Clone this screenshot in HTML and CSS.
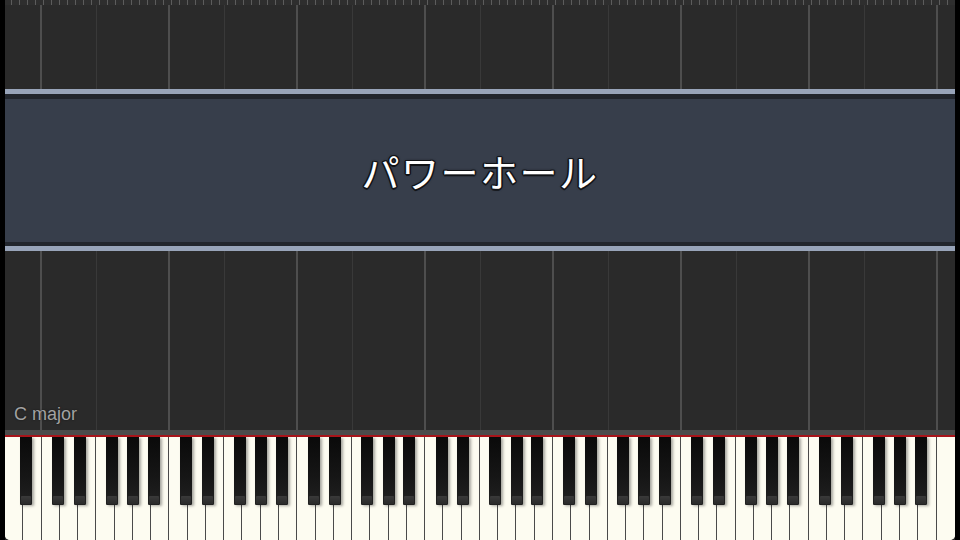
FILE: index.html
```html
<!DOCTYPE html>
<html lang="ja">
<head>
<meta charset="utf-8">
<title>パワーホール</title>
<link rel="stylesheet" href="styles.css">
</head>
<body>
<div class="screen">
  <div class="ruler"></div>
  <div class="grid grid-top"></div>
  <div class="band">
    <div class="band-inner">
      <h1 class="title">パワーホール</h1>
    </div>
  </div>
  <div class="grid grid-bottom">
    <span class="key-label">C major</span>
  </div>
  <div class="keybed"></div>
  <div class="keyboard">
    <div class="whites">
      <div class="white"></div><div class="white"></div><div class="white"></div><div class="white"></div><div class="white"></div><div class="white"></div><div class="white"></div><div class="white"></div><div class="white"></div><div class="white"></div>
      <div class="white"></div><div class="white"></div><div class="white"></div><div class="white"></div><div class="white"></div><div class="white"></div><div class="white"></div><div class="white"></div><div class="white"></div><div class="white"></div>
      <div class="white"></div><div class="white"></div><div class="white"></div><div class="white"></div><div class="white"></div><div class="white"></div><div class="white"></div><div class="white"></div><div class="white"></div><div class="white"></div>
      <div class="white"></div><div class="white"></div><div class="white"></div><div class="white"></div><div class="white"></div><div class="white"></div><div class="white"></div><div class="white"></div><div class="white"></div><div class="white"></div>
      <div class="white"></div><div class="white"></div><div class="white"></div><div class="white"></div><div class="white"></div><div class="white"></div><div class="white"></div><div class="white"></div><div class="white"></div><div class="white"></div>
      <div class="white"></div><div class="white last"></div>
    </div>
    <div class="black" style="left:14.8px"></div>
    <div class="black" style="left:46.8px"></div>
    <div class="black" style="left:68.6px"></div>
    <div class="black" style="left:100.6px"></div>
    <div class="black" style="left:121.9px"></div>
    <div class="black" style="left:142.7px"></div>
    <div class="black" style="left:174.7px"></div>
    <div class="black" style="left:196.5px"></div>
    <div class="black" style="left:228.5px"></div>
    <div class="black" style="left:249.8px"></div>
    <div class="black" style="left:270.5px"></div>
    <div class="black" style="left:302.6px"></div>
    <div class="black" style="left:324.4px"></div>
    <div class="black" style="left:356.4px"></div>
    <div class="black" style="left:377.7px"></div>
    <div class="black" style="left:398.4px"></div>
    <div class="black" style="left:430.5px"></div>
    <div class="black" style="left:452.2px"></div>
    <div class="black" style="left:484.3px"></div>
    <div class="black" style="left:505.5px"></div>
    <div class="black" style="left:526.3px"></div>
    <div class="black" style="left:558.4px"></div>
    <div class="black" style="left:580.1px"></div>
    <div class="black" style="left:612.2px"></div>
    <div class="black" style="left:633.4px"></div>
    <div class="black" style="left:654.2px"></div>
    <div class="black" style="left:686.2px"></div>
    <div class="black" style="left:708.0px"></div>
    <div class="black" style="left:740.0px"></div>
    <div class="black" style="left:761.3px"></div>
    <div class="black" style="left:782.1px"></div>
    <div class="black" style="left:814.1px"></div>
    <div class="black" style="left:835.9px"></div>
    <div class="black" style="left:867.9px"></div>
    <div class="black" style="left:889.2px"></div>
    <div class="black" style="left:910.0px"></div>
  </div>
</div>
</body>
</html>
```

FILE: styles.css
```css
html, body {
  margin: 0;
  padding: 0;
  background: #000;
  width: 960px;
  height: 540px;
  overflow: hidden;
}

.screen {
  width: 950px;
  height: 540px;
  margin-left: 5px;
  display: flex;
  flex-direction: column;
  background: #2a2a2a;
}

.ruler {
  height: 5px;
  flex: none;
  background-color: #2e2e2e;
  background-image: repeating-linear-gradient(to right, transparent 0 6px, #5c5c5c 6px 7px, transparent 7px 8px);
}

.grid {
  flex: none;
  background-color: #2a2a2a;
  background-image:
    repeating-linear-gradient(to right, #4e4e4e 0 2px, transparent 2px 56px, #393939 56px 57px, transparent 57px 128px);
  background-position: 35px 0;
}

.grid-top {
  height: 84px;
}

.grid-bottom {
  height: 179px;
  display: flex;
  flex-direction: column;
  justify-content: flex-end;
  padding: 0 0 5px 9px;
  box-sizing: border-box;
}

.key-label {
  font-family: "Liberation Sans", Arial, sans-serif;
  font-size: 18px;
  color: #a2a2a2;
  text-shadow: 0 0 2px rgba(0, 0, 0, 0.6);
}

.band {
  flex: none;
  height: 162px;
  box-sizing: border-box;
  border-top: 5px solid #98a4b9;
  border-bottom: 5px solid #98a4b9;
  display: flex;
}

.band-inner {
  flex: 1;
  box-sizing: border-box;
  border-top: 5px solid #22262d;
  border-bottom: 4px solid #22262d;
  background: #373e4b;
  display: flex;
  align-items: center;
  justify-content: center;
}

.title {
  margin: 0;
  font-family: "Noto Sans CJK JP", "Noto Sans", sans-serif;
  font-weight: 400;
  font-size: 38px;
  color: #ffffff;
  letter-spacing: 1.5px;
  text-shadow:
    -1px -1px 0 #111317, 1px -1px 0 #111317, -1px 1px 0 #111317, 1px 1px 0 #111317,
    0 -1.5px 0 #111317, 0 1.5px 0 #111317, -1.5px 0 0 #111317, 1.5px 0 0 #111317,
    0 0 3px #111317;
}

.keybed {
  flex: none;
  height: 5px;
  background: #4b4b4b;
  border-bottom: 2px solid #a8141a;
}

.keyboard {
  flex: 1;
  position: relative;
  border-radius: 0 0 5px 5px;
  overflow: hidden;
  background: #fdfcf1;
}

.whites {
  display: flex;
  height: 100%;
}

.white {
  flex: 1;
  background: #fdfcf1;
  box-shadow: inset -1px 0 0 #4a4a4a;
}

.white.last {
  box-shadow: none;
}

.black {
  position: absolute;
  top: 0;
  width: 12px;
  height: 68px;
  background: linear-gradient(to bottom, #0a0a0a 0%, #161616 60%, #222 100%);
  box-shadow: 2px 1px 3px rgba(0, 0, 0, 0.35);
  border-radius: 0 0 1px 1px;
}

.black::after {
  content: "";
  position: absolute;
  left: 1px;
  right: 1px;
  bottom: 1px;
  height: 8px;
  background: linear-gradient(to bottom, #3a3a3a, #2a2a2a);
  border-radius: 1px 1px 0 0;
}
```
